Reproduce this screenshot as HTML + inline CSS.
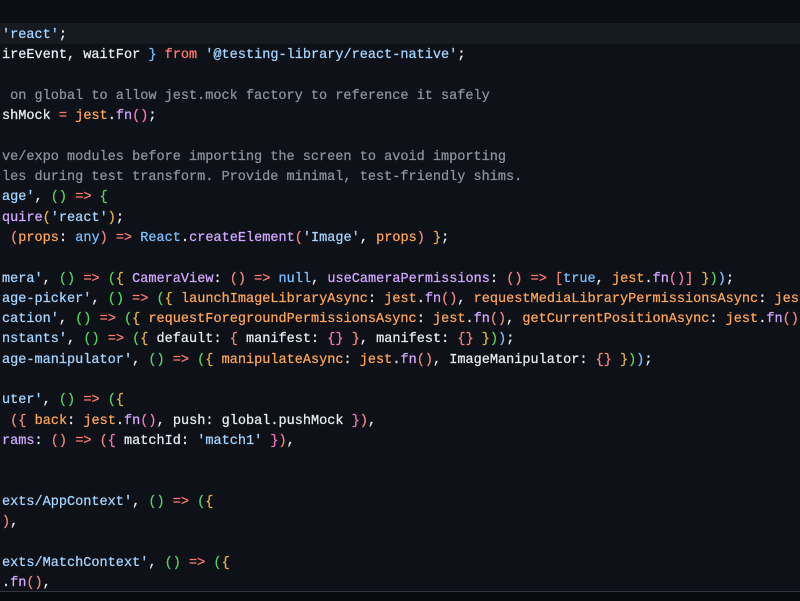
<!DOCTYPE html>
<html><head><meta charset="utf-8"><style>
html,body{margin:0;padding:0;width:800px;height:600px;overflow:hidden;background:#0e1117;}
.top{position:absolute;left:0;top:0;width:800px;height:23px;background:#0b0e14;}
.hl{position:absolute;left:0;top:23px;width:800px;height:21px;background:#161a21;}
.bot{position:absolute;left:0;top:591px;width:800px;height:9px;background:#07090d;border-top:1px solid #30363d;}
pre{position:absolute;left:2px;top:26px;margin:0;font-family:"Liberation Mono",monospace;font-size:13.55px;line-height:20.3px;color:#e6edf3;white-space:pre;-webkit-text-stroke:0.25px currentColor;}
.s{color:#a5d6ff}.k{color:#ff7b72}.f{color:#ffa657}.p{color:#d2a8ff}.c{color:#8b949e}.b{color:#79c0ff}
.y{color:#e3b341}.g{color:#56d364}.r{color:#f0877e}.m{color:#f778ba}
</style></head><body>
<div class="top"></div><div class="hl"></div>
<pre><span class="s">'react'</span>;
ireEvent, waitFor <span class="b">}</span> <span class="k">from</span> <span class="s">'@testing-library/react-native'</span>;

<span class="c"> on global to allow jest.mock factory to reference it safely</span>
shMock <span class="k">=</span> <span class="f">jest</span>.<span class="p">fn</span><span class="m">()</span>;

<span class="c">ve/expo modules before importing the screen to avoid importing</span>
<span class="c">les during test transform. Provide minimal, test-friendly shims.</span>
<span class="s">age'</span>, <span class="g">()</span> <span class="k">=&gt;</span> <span class="g">{</span>
<span class="p">quire</span><span class="y">(</span><span class="s">'react'</span><span class="y">)</span>;
 <span class="r">(</span><span class="f">props</span>: <span class="b">any</span><span class="r">)</span> <span class="k">=&gt;</span> <span class="b">React</span>.<span class="p">createElement</span><span class="r">(</span><span class="s">'Image'</span>, <span class="f">props</span><span class="r">)</span> <span class="y">}</span>;

<span class="s">mera'</span>, <span class="g">()</span> <span class="k">=&gt;</span> <span class="g">(</span><span class="y">{</span> <span class="p">CameraView</span>: <span class="r">()</span> <span class="k">=&gt;</span> <span class="b">null</span>, <span class="p">useCameraPermissions</span>: <span class="r">()</span> <span class="k">=&gt;</span> <span class="r">[</span><span class="b">true</span>, <span class="f">jest</span>.<span class="p">fn</span><span class="m">()</span><span class="r">]</span> <span class="y">}</span><span class="g">)</span><span class="b">)</span>;
<span class="s">age-picker'</span>, <span class="g">()</span> <span class="k">=&gt;</span> <span class="g">(</span><span class="y">{</span> <span class="f">launchImageLibraryAsync</span>: <span class="f">jest</span>.<span class="p">fn</span><span class="r">()</span>, <span class="f">requestMediaLibraryPermissionsAsync</span>: <span class="f">jest</span>
<span class="s">cation'</span>, <span class="g">()</span> <span class="k">=&gt;</span> <span class="g">(</span><span class="y">{</span> <span class="f">requestForegroundPermissionsAsync</span>: <span class="f">jest</span>.<span class="p">fn</span><span class="r">()</span>, <span class="f">getCurrentPositionAsync</span>: <span class="f">jest</span>.<span class="p">fn</span><span class="r">()</span>
<span class="s">nstants'</span>, <span class="g">()</span> <span class="k">=&gt;</span> <span class="g">(</span><span class="y">{</span> default: <span class="r">{</span> manifest: <span class="m">{}</span> <span class="r">}</span>, manifest: <span class="r">{}</span> <span class="y">}</span><span class="g">)</span><span class="b">)</span>;
<span class="s">age-manipulator'</span>, <span class="g">()</span> <span class="k">=&gt;</span> <span class="g">(</span><span class="y">{</span> <span class="f">manipulateAsync</span>: <span class="f">jest</span>.<span class="p">fn</span><span class="r">()</span>, ImageManipulator: <span class="r">{}</span> <span class="y">}</span><span class="g">)</span><span class="b">)</span>;

<span class="s">uter'</span>, <span class="g">()</span> <span class="k">=&gt;</span> <span class="g">(</span><span class="y">{</span>
 <span class="r">(</span><span class="r">{</span> <span class="f">back</span>: <span class="f">jest</span>.<span class="p">fn</span><span class="m">()</span>, push: global.pushMock <span class="m">}</span><span class="r">)</span>,
<span class="p">rams</span>: <span class="r">()</span> <span class="k">=&gt;</span> <span class="r">(</span><span class="m">{</span> matchId: <span class="s">'match1'</span> <span class="m">}</span><span class="r">)</span>,


<span class="s">exts/AppContext'</span>, <span class="g">()</span> <span class="k">=&gt;</span> <span class="g">(</span><span class="y">{</span>
<span class="r">)</span>,

<span class="s">exts/MatchContext'</span>, <span class="g">()</span> <span class="k">=&gt;</span> <span class="g">(</span><span class="y">{</span>
.<span class="p">fn</span><span class="r">()</span>,</pre>
<div class="bot"></div>
</body></html>
